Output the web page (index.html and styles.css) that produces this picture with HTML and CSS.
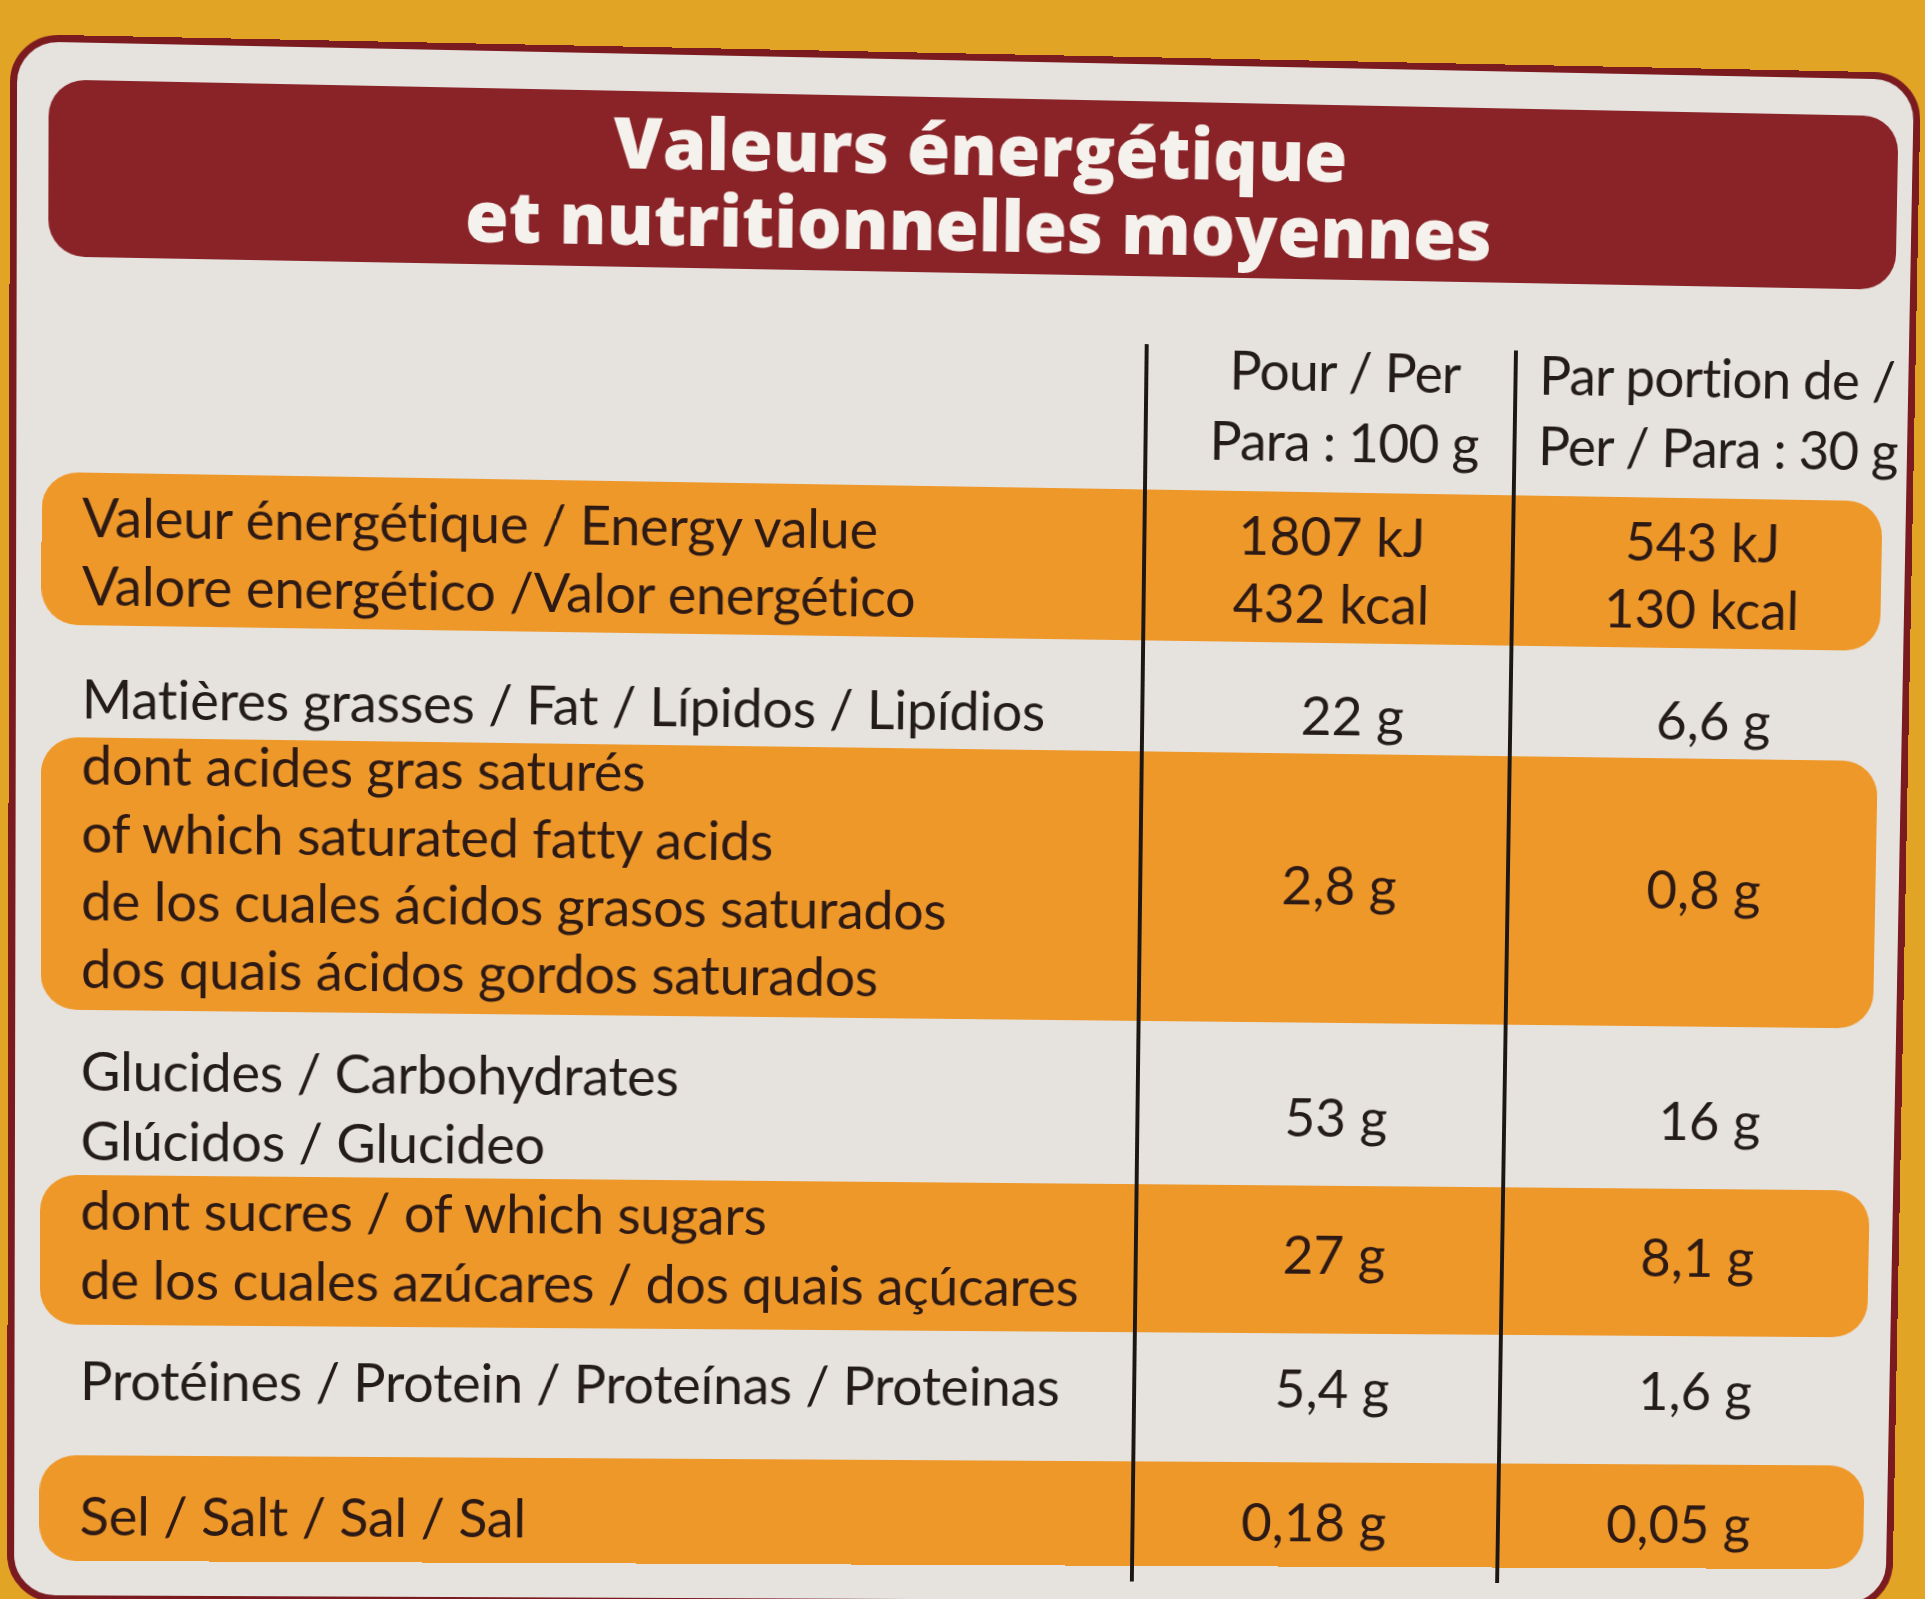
FILE: index.html
```html
<!DOCTYPE html>
<html lang="fr">
<head>
<meta charset="utf-8">
<title>Valeurs énergétique et nutritionnelles moyennes</title>
<link rel="stylesheet" href="styles.css">
</head>
<body>
<div class="card">
  <div class="banner">
    <h1 class="title">Valeurs énergétique<br>et nutritionnelles moyennes</h1>
  </div>
  <div class="table">
    <div class="head">
      <div></div>
      <div class="hcell c1">Pour / Per<br>Para : 100 g</div>
      <div class="hcell c2">Par portion de /<br>Per / Para : 30 g</div>
    </div>
    <div class="row orange r-energy">
      <div class="label">Valeur énergétique / Energy value<br>Valore energético /Valor energético</div>
      <div class="val c1">1807 kJ<br>432 kcal</div>
      <div class="val c2">543 kJ<br>130 kcal</div>
    </div>
    <div class="row r-fat">
      <div class="label">Matières grasses / Fat / Lípidos / Lipídios</div>
      <div class="val c1">22 g</div>
      <div class="val c2">6,6 g</div>
    </div>
    <div class="row orange r-sat">
      <div class="label">dont acides gras saturés<br>of which saturated fatty acids<br>de los cuales ácidos grasos saturados<br>dos quais ácidos gordos saturados</div>
      <div class="val c1">2,8 g</div>
      <div class="val c2">0,8 g</div>
    </div>
    <div class="row r-carb">
      <div class="label">Glucides / Carbohydrates<br>Glúcidos / Glucideo</div>
      <div class="val c1">53 g</div>
      <div class="val c2">16 g</div>
    </div>
    <div class="row orange r-sug">
      <div class="label">dont sucres / of which sugars<br>de los cuales azúcares / dos quais açúcares</div>
      <div class="val c1">27 g</div>
      <div class="val c2">8,1 g</div>
    </div>
    <div class="row r-prot">
      <div class="label">Protéines / Protein / Proteínas / Proteinas</div>
      <div class="val c1">5,4 g</div>
      <div class="val c2">1,6 g</div>
    </div>
    <div class="row orange r-salt">
      <div class="label">Sel / Salt / Sal / Sal</div>
      <div class="val c1">0,18 g</div>
      <div class="val c2">0,05 g</div>
    </div>
    <div class="vline vline-1"></div>
    <div class="vline vline-2"></div>
  </div>
</div>
</body>
</html>
```
FILE: styles.css
```css
html, body {
  margin: 0;
  padding: 0;
  width: 1925px;
  height: 1599px;
  overflow: hidden;
  background: #e2a424;
}

.card {
  box-sizing: border-box;
  width: 1911px;
  height: 1568px;
  border: 7px solid #7b1b20;
  border-radius: 48px;
  background: #e6e3df;
  padding: 37px 0 0 0;
  transform-origin: 0 0;
  transform: matrix3d(1.020209, 0.021176, 0, 0.000010516, -0.00185, 1.014407, 0, 0.0000089936, 0, 0, 1, 0, 10, 34, 0, 1);
}

.banner {
  box-sizing: border-box;
  height: 175px;
  margin: 0 15px 0 31px;
  padding-top: 12px;
  background: #8a2328;
  border-radius: 36px;
  text-align: center;
}

.title {
  margin: 0;
  font-family: "Open Sans", "Noto Sans", sans-serif;
  font-weight: 800;
  font-size: 70px;
  line-height: 76px;
  color: #f5f1ec;
}

.table {
  position: relative;
  margin: 0 24px 0 25px;
  font-family: Lato, "Open Sans", sans-serif;
  font-weight: 400;
  font-size: 54px;
  color: #2e1a14;
  white-space: nowrap;
}

.head,
.row {
  display: grid;
  grid-template-columns: 1099px 373px 376px;
}

.head {
  padding: 56px 0 16px;
  line-height: 71px;
  letter-spacing: -0.8px;
  color: #231c19;
}

.row {
  align-items: center;
}

.orange {
  background: #ef982a;
  border-radius: 36px;
}

.label {
  padding-left: 40px;
  letter-spacing: -0.25px;
}

.c1 {
  text-align: center;
  padding-left: 30px;
}

.c2 {
  text-align: center;
  padding-left: 24px;
}

.hcell.c1 { padding-left: 28px; }
.hcell.c2 { padding-left: 24px; }

.r-energy { padding: 10px 0 6px; line-height: 68px; }
.r-energy .c1 { padding-left: 6px; }
.r-energy .c2 { padding-left: 10px; }

.r-fat { padding: 38px 0 5px; line-height: 69px; color: #231c19; }
.r-fat .c1 { padding-left: 52px; }
.r-fat .c2 { padding-left: 38px; }

.r-sat { padding: 0 0 8px; line-height: 68px; }
.r-sat .label { margin-top: -7px; }

.r-carb { padding: 26px 0 0; line-height: 70px; color: #231c19; }
.r-carb .c2 { padding-left: 44px; }

.r-sug { padding: 0 0 11px; line-height: 70px; }

.r-prot { padding: 21px 0 42px; line-height: 69px; color: #231c19; }

.r-salt { padding: 26px 0 12px; line-height: 69px; }
.r-salt .c1 { padding-left: 0; padding-right: 4px; }
.r-salt .c2 { padding-left: 0; padding-right: 6px; }

.vline {
  position: absolute;
  top: 68px;
  width: 4px;
  height: 1255px;
  background: #1d1714;
  z-index: 2;
}

.vline-1 { left: 1097px; }
.vline-2 { left: 1470px; }
```
